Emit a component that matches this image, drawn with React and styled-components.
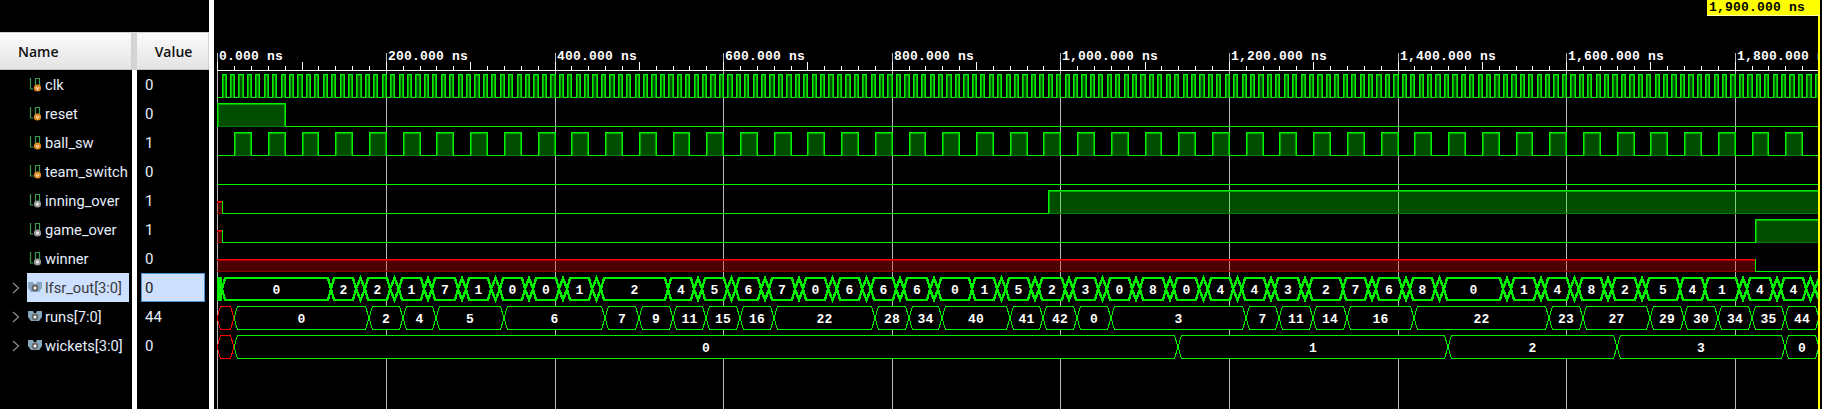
import React from "react"
import styled, { createGlobalStyle } from "styled-components"

const GlobalStyle = createGlobalStyle`
  html, body { margin: 0; padding: 0; background: #000; overflow: hidden; }
  #root { width: 1822px; height: 409px; }
`

const Page = styled.div`
  display: flex;
  width: 1822px;
  height: 409px;
  background: #000;
  font-family: Roboto, "Open Sans", sans-serif;
`
const Column = styled.div`
  display: flex;
  flex-direction: column;
  flex: none;
  width: ${(p) => p.$width}px;
  padding-top: 32px;
  box-sizing: border-box;
`
const Header = styled.div`
  display: flex;
  align-items: center;
  justify-content: ${(p) => (p.$center ? "center" : "flex-start")};
  height: 38px;
  box-sizing: border-box;
  padding-left: ${(p) => (p.$center ? 2 : 18)}px;
  background: linear-gradient(#fbfbfb, #e3e3e3);
  border-top: 1px solid #cfcfcf;
  border-bottom: 1px solid #c4c4c4;
  border-right: 1px solid #cfcfcf;
  color: #111;
  font-family: "Open Sans", sans-serif;
  font-size: 14px;
  font-weight: 600;
`
const Gap = styled.div`
  flex: none;
  width: ${(p) => p.$width}px;
  height: 409px;
  background: ${(p) =>
    p.$header ? "linear-gradient(#000 32px, #d4d4d4 32px, #d4d4d4 70px, #fff 70px)" : "#fff"};
`
const Rows = styled.div`
  display: flex;
  flex-direction: column;
`
const NameRow = styled.div`
  display: flex;
  align-items: center;
  height: 29px;
`
const Gutter = styled.div`
  display: flex;
  align-items: center;
  flex: none;
  width: 27px;
  padding-left: 12px;
  box-sizing: border-box;
`
const NameBody = styled.div`
  display: flex;
  align-items: center;
  flex: none;
  width: 102px;
  height: 29px;
  padding-left: ${(p) => (p.$bus ? 1 : 2)}px;
  box-sizing: border-box;
  background: ${(p) => (p.$selected ? "#cde0ff" : "transparent")};
`
const IconBox = styled.div`
  display: flex;
  flex: none;
`
const NameText = styled.span`
  margin-left: ${(p) => (p.$bus ? 3 : 2)}px;
  padding-top: 1px;
  color: ${(p) => (p.$selected ? "#3a3a3a" : "#e6eefc")};
  font-size: 14.7px;
  white-space: nowrap;
`
const ValueRow = styled.div`
  display: flex;
  align-items: center;
  height: 29px;
  margin: 0 4px;
  padding: 1px 0 0 4px;
  box-sizing: border-box;
  color: ${(p) => (p.$selected ? "#222" : "#e6eefc")};
  font-size: 15px;
  background: ${(p) => (p.$selected ? "#cde0ff" : "transparent")};
  outline: ${(p) => (p.$selected ? "1px solid #4a94d8" : "none")};
  outline-offset: -1px;
`
const WavePanel = styled.div`
  position: relative;
  flex: 1;
  height: 409px;
`
const WaveSvg = styled.svg`
  display: block;
`
const TimeFlag = styled.div`
  position: absolute;
  top: 0;
  left: 1493px;
  width: 113px;
  height: 16px;
  padding: 1px 0 0 2px;
  box-sizing: border-box;
  background: #ffff00;
  border-bottom: 1px solid #ffffb0;
  color: #000;
  font: bold 13px/14px "Liberation Mono", monospace;
  letter-spacing: 0.2px;
  white-space: nowrap;
`
const Cursor = styled.div`
  position: absolute;
  top: 16px;
  bottom: 0;
  left: 1604px;
  width: 2px;
  background: #ffff00;
`
const RulerLabel = styled.text`
  fill: #fff;
  font: bold 13px "Liberation Mono", monospace;
  letter-spacing: 0.2px;
`
const BusLabel = styled.text`
  fill: #fff;
  font: bold 13px "Liberation Mono", monospace;
  letter-spacing: 0.1px;
  text-anchor: middle;
`

const BRIGHT = "#00f000"
const DIM = "#00a800"
const X0 = 217.3 - 214
const PX_PER_NS = 0.843
const END = 1900
const x = (ns) => Math.round(X0 + ns * PX_PER_NS)
const topOf = (row) => 74 + 29 * row
const lowOf = (row) => 97 + 29 * row

const signals = [
  { name: "clk", value: "0", kind: "in" },
  { name: "reset", value: "0", kind: "in" },
  { name: "ball_sw", value: "1", kind: "in" },
  { name: "team_switch", value: "0", kind: "in" },
  { name: "inning_over", value: "1", kind: "out" },
  { name: "game_over", value: "1", kind: "out" },
  { name: "winner", value: "0", kind: "out" },
  { name: "lfsr_out[3:0]", value: "0", kind: "bus", selected: true },
  { name: "runs[7:0]", value: "44", kind: "bus" },
  { name: "wickets[3:0]", value: "0", kind: "bus" },
]

// [from ns, to ns, level]
const clkSegs = []
clkSegs.push([0, 5, 0])
for (let t = 5; t < END; t += 10) {
  clkSegs.push([t, t + 5, 1])
  if (t + 5 < END) clkSegs.push([t + 5, t + 10, 0])
}
const ballSegs = []
for (let t = 0; t < END; t += 40) {
  ballSegs.push([t, t + 20, 0])
  ballSegs.push([t + 20, t + 40, 1])
}
const digital = [
  clkSegs,
  [[0, 80, 1], [80, END, 0]],
  ballSegs,
  [[0, END, 0]],
  [[0, 5, "x"], [5, 985, 0], [985, END, 1]],
  [[0, 5, "x"], [5, 1824, 0], [1824, END, 1]],
  [[0, 1824, "x"], [1824, END, 0]],
]

// lfsr_out: [label, from ns, to ns], short unlabelled slices sit in the gaps
const lfsrNamed = [
  ["0", 5, 135], ["2", 135, 165], ["2", 175, 205], ["1", 215, 245], ["7", 255, 285],
  ["1", 295, 325], ["0", 335, 365], ["0", 375, 405], ["1", 415, 445], ["2", 455, 535],
  ["4", 535, 565], ["5", 575, 605], ["6", 615, 645], ["7", 655, 685], ["0", 695, 725],
  ["6", 735, 765], ["6", 775, 805], ["6", 815, 845], ["0", 855, 895], ["1", 895, 925],
  ["5", 935, 965], ["2", 975, 1005], ["3", 1015, 1045], ["0", 1055, 1085], ["8", 1095, 1125],
  ["0", 1135, 1165], ["4", 1175, 1205], ["4", 1215, 1245], ["3", 1255, 1285], ["2", 1295, 1335],
  ["7", 1335, 1365], ["6", 1375, 1405], ["8", 1415, 1445], ["0", 1455, 1525], ["1", 1535, 1565],
  ["4", 1575, 1605], ["8", 1615, 1645], ["2", 1655, 1685], ["5", 1695, 1735], ["4", 1735, 1765],
  ["1", 1765, 1805], ["4", 1815, 1845], ["4", 1855, 1885],
]
const lfsrSegs = []
lfsrNamed.forEach((seg, i) => {
  lfsrSegs.push(seg)
  const next = lfsrNamed[i + 1]
  if (next && next[1] > seg[2]) lfsrSegs.push(["", seg[2], next[1]])
})
lfsrSegs.push(["", 1885, 1895], ["", 1895, END + 5])

const stepsToSegs = (steps) =>
  steps.map((s, i) => [s[0], s[1], i + 1 < steps.length ? steps[i + 1][1] : END])

const runsSegs = stepsToSegs([
  ["0", 20], ["2", 180], ["4", 220], ["5", 260], ["6", 340], ["7", 460], ["9", 500], ["11", 540],
  ["15", 580], ["16", 620], ["22", 660], ["28", 780], ["34", 820], ["40", 860], ["41", 940],
  ["42", 980], ["0", 1020], ["3", 1060], ["7", 1220], ["11", 1260], ["14", 1300], ["16", 1340],
  ["22", 1420], ["23", 1580], ["27", 1620], ["29", 1700], ["30", 1740], ["34", 1780], ["35", 1820],
  ["44", 1860],
])
const wicketSegs = stepsToSegs([["0", 20], ["1", 1140], ["2", 1460], ["3", 1660], ["0", 1860]])

const DigitalWave = ({ row, segs }) => {
  const top = topOf(row)
  const low = lowOf(row)
  const mid = top + 11
  return segs.map(([from, to, level]) => {
    const a = x(from)
    const b = x(Math.min(to, END))
    if (level === 1) {
      return (
        <g key={from}>
          <rect x={a} y={top} width={b - a} height={low - top} fill="rgba(0,255,0,0.3)" />
          <path d={`M${a} ${low + 0.5}H${b}`} stroke="#007a00" />
          <path d={`M${a + 1.5} ${low}V${top + 1.5}H${b - 0.5}V${low}`} stroke={DIM} fill="none" />
          <path d={`M${a + 0.5} ${low + 1}V${top + 0.5}H${b + 0.5}V${low + 1}`} stroke={BRIGHT} fill="none" />
        </g>
      )
    }
    if (level === "x") {
      return (
        <g key={from}>
          <rect x={a} y={mid} width={b - a} height={low - mid} fill="rgba(255,0,0,0.3)" />
          <path d={`M${a} ${low + 0.5}H${b}`} stroke="#8a0000" />
          <path d={`M${a} ${mid + 1.5}H${b}`} stroke="#b00000" />
          <path d={`M${a} ${mid + 0.5}H${b}`} stroke="#ff0000" />
          <path d={`M${b + 0.5} ${mid}V${low}`} stroke={BRIGHT} />
        </g>
      )
    }
    return <path key={from} d={`M${a} ${low + 0.5}H${b + 1}`} stroke={BRIGHT} />
  })
}

const Hexagon = ({ from, to, row, color, width, label }) => {
  const a = x(from)
  const b = x(to)
  const top = topOf(row) + (width > 1 ? 1 : 0.5)
  const low = lowOf(row) + (width > 1 ? 0 : 0.5)
  const mid = (top + low) / 2
  const s = b - a < 10 ? (b - a) / 2 : width > 1 ? 3 : 3.5
  return (
    <>
      <path
        d={`M${a} ${mid}L${a + s} ${top}H${b - s}L${b} ${mid}L${b - s} ${low}H${a + s}Z`}
        fill="#000"
        stroke={color}
        strokeWidth={width}
      />
      {label && (
        <BusLabel x={(a + b) / 2} y={mid + 4.5} shapeRendering="auto">
          {label}
        </BusLabel>
      )}
    </>
  )
}

const BusWave = ({ row, segs, width }) =>
  segs.map(([label, from, to]) => (
    <Hexagon key={from} row={row} from={from} to={to} label={label} color={BRIGHT} width={width} />
  ))

const Ruler = () => {
  const ticks = []
  for (let ns = 0; ns < END; ns += 20) {
    const major = ns % 100 === 0
    ticks.push(<path key={ns} d={`M${x(ns) + 0.5} ${major ? 62 : 66}V70`} stroke="#fff" />)
  }
  return (
    <>
      <path d={`M${x(0)} 70.5H1604`} stroke="#fff" />
      {ticks}
    </>
  )
}

const gridTimes = [0, 200, 400, 600, 800, 1000, 1200, 1400, 1600, 1800]
const timeText = (ns) => `${ns >= 1000 ? ns.toString().replace(/(\d)(\d{3})$/, "$1,$2") : ns}.000 ns`

const Waveforms = () => (
  <WaveSvg width="1604" height="409" shapeRendering="crispEdges">
    {gridTimes.map((ns) => (
      <path key={ns} d={`M${x(ns) + 0.5} 53V409`} stroke="#b8b8b8" />
    ))}
    <Ruler />
    {gridTimes.map((ns) => (
      <RulerLabel key={ns} x={x(ns) + 2} y={60} shapeRendering="auto">
        {timeText(ns)}
      </RulerLabel>
    ))}
    {digital.map((segs, row) => (
      <DigitalWave key={row} row={row} segs={segs} />
    ))}
    <rect x={x(0)} y={topOf(7)} width={x(5) - x(0)} height={24} fill={BRIGHT} />
    <BusWave row={7} segs={lfsrSegs} width={2.4} />
    <Hexagon row={8} from={0} to={20} color="#ff0000" width={1} />
    <BusWave row={8} segs={runsSegs} width={1} />
    <Hexagon row={9} from={0} to={20} color="#ff0000" width={1} />
    <BusWave row={9} segs={wicketSegs} width={1} />
  </WaveSvg>
)

const ScalarIcon = ({ kind }) => (
  <svg width="14" height="16" viewBox="0 0 14 16">
    <path d="M1.5 1v11h3" fill="none" stroke="#3c9a50" strokeWidth="1.2" />
    <path d="M6.5 9V1.5h4V9" fill="none" stroke="#3c9a50" strokeWidth="1.2" />
    {kind === "in" ? (
      <>
        <circle cx="8.5" cy="11" r="3.6" fill="#e08a24" />
        <path d="M7 10l1.5 2.6L10 10" fill="none" stroke="#fff" strokeWidth="0.9" />
      </>
    ) : (
      <>
        <circle cx="8.5" cy="11" r="3.6" fill="#9a9a9a" />
        <circle cx="8.5" cy="11" r="1.5" fill="#eee" />
      </>
    )}
  </svg>
)

const BusIcon = () => (
  <svg width="14" height="14" viewBox="0 0 14 14">
    <path d="M0 1h5l1 2h2l1-2h5v6l-3 4H3L0 7z" fill="#86a8bf" />
    <circle cx="7" cy="7" r="3.4" fill="#666" />
    <circle cx="7" cy="7" r="1.5" fill="#f2f2f2" />
  </svg>
)

const Chevron = () => (
  <svg width="8" height="12" viewBox="0 0 8 12">
    <path d="M1 1l5.5 5L1 11" fill="none" stroke="#858585" strokeWidth="1.4" />
  </svg>
)

const App = () => (
  <Page>
    <GlobalStyle />
    <Column $width={132}>
      <Header>Name</Header>
      <Rows>
        {signals.map((s) => {
          const bus = s.kind === "bus"
          return (
            <NameRow key={s.name}>
              <Gutter>{bus && <Chevron />}</Gutter>
              <NameBody $selected={s.selected} $bus={bus}>
                <IconBox>{bus ? <BusIcon /> : <ScalarIcon kind={s.kind} />}</IconBox>
                <NameText $selected={s.selected} $bus={bus}>
                  {s.name}
                </NameText>
              </NameBody>
            </NameRow>
          )
        })}
      </Rows>
    </Column>
    <Gap $width={5} $header />
    <Column $width={72}>
      <Header $center>Value</Header>
      <Rows>
        {signals.map((s) => (
          <ValueRow key={s.name} $selected={s.selected}>
            {s.value}
          </ValueRow>
        ))}
      </Rows>
    </Column>
    <Gap $width={5} />
    <WavePanel>
      <Waveforms />
      <TimeFlag>1,900.000 ns</TimeFlag>
      <Cursor />
    </WavePanel>
  </Page>
)

export default App
